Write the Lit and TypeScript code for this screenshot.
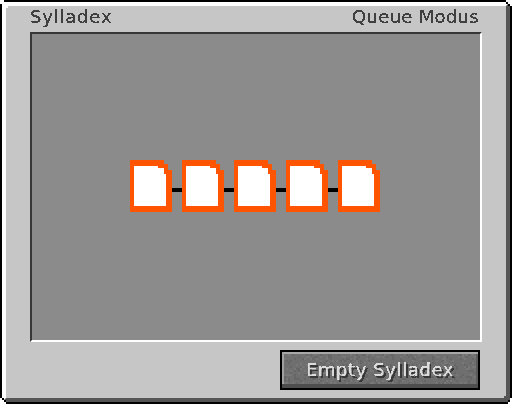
import { LitElement, html, css, svg } from "lit";
import { customElement } from "lit/decorators.js";

const noise = (() => {
  let seed = 7;
  const cells: { x: number; y: number; o: number }[] = [];
  for (let y = 0; y < 36; y += 2) {
    for (let x = 0; x < 196; x += 2) {
      seed = (seed * 1103515245 + 12345) & 0x7fffffff;
      const r = (seed >> 16) % 100;
      if (r < 30) cells.push({ x, y, o: r < 15 ? 1 : 0 });
    }
  }
  return cells;
})();

@customElement("app-root")
export class AppRoot extends LitElement {
  static styles = css`
    :host { display: block; width: 512px; height: 404px; background: #fff; font-family: "DejaVu Sans", sans-serif; }
    .window {
      width: 512px; height: 404px; box-sizing: border-box; padding: 2px; background: #000;
      clip-path: polygon(4px 0, 506px 0, 506px 2px, 508px 2px, 508px 4px, 510px 4px, 510px 6px, 512px 6px, 512px 398px, 510px 398px, 510px 402px, 508px 402px, 508px 404px, 6px 404px, 6px 402px, 4px 402px, 4px 400px, 2px 400px, 2px 398px, 0 398px, 0 4px, 2px 4px, 2px 2px, 4px 2px);
    }
    .bevel {
      height: 100%; box-sizing: border-box; border: 4px solid; border-color: #fff #555 #555 #fff;
      background: #c6c6c6;
      clip-path: polygon(0 0, 504px 0, 504px 2px, 506px 2px, 506px 4px, 508px 4px, 508px 398px, 506px 398px, 506px 400px, 4px 400px, 4px 398px, 2px 398px, 2px 396px, 0 396px);
    }
    .body {
      position: relative;
      height: 100%; box-sizing: border-box; padding: 0 24px; background: #c6c6c6;
      display: flex; flex-direction: column;
    }
    .body::before { content: ""; position: absolute; left: 0; top: 0; width: 2px; height: 2px; background: #fff; }
    .body::after { content: ""; position: absolute; right: 0; bottom: 0; width: 2px; height: 2px; background: #555; }
    .title {
      height: 26px; flex: none; display: flex; justify-content: space-between; align-items: center;
      padding: 0 3px 0 0; color: #404040; font-size: 18px; line-height: 22px; letter-spacing: 0.8px;
    }
    .title span { margin-top: -4px; filter: url(#crisp); }
    .title .modus { letter-spacing: 0.3px; }
    .frame {
      flex: none; height: 310px; box-sizing: border-box; background: #8b8b8b; border: 2px solid;
      border-color: #373737 #fff #fff #373737;
      display: flex; align-items: center; justify-content: center; padding: 0 2px 2px 0;
    }
    .card { display: block; width: 42px; height: 52px; flex: none; }
    .link { width: 10px; height: 4px; background: #000; flex: none; margin-top: 8px; }
    .actions { flex: 1; display: flex; justify-content: flex-end; align-items: flex-start; padding: 8px 2px 0 0; }
    .button {
      position: relative; width: 200px; height: 40px; box-sizing: border-box; border: 2px solid #000;
      background: #6f6f6f; padding: 0; color: #dcdcdc; font: inherit; font-size: 18px; letter-spacing: 0.6px;
      display: flex; align-items: center; justify-content: center; overflow: hidden;
    }
    .tex { position: absolute; inset: 0; width: 196px; height: 36px; display: block; }
    .label { position: relative; text-shadow: 2px 2px 0 #383838; margin-top: -1px; filter: url(#crisp); }
    .defs { position: absolute; width: 0; height: 0; }
  `;

  private card() {
    return html`<svg class="card" viewBox="0 0 42 52" shape-rendering="crispEdges">
      <polygon fill="#ff5500" points="0,0 34,0 34,4 38,4 38,10 42,10 42,52 0,52" />
      <polygon fill="#fff" points="4,6 28,6 28,8 34,8 34,14 36,14 36,46 4,46" />
    </svg>`;
  }

  render() {
    const cards = [0, 1, 2, 3, 4];
    return html`
      <svg class="defs" aria-hidden="true">
        <filter id="crisp" x="-5%" y="-5%" width="110%" height="110%" color-interpolation-filters="sRGB">
          <feComponentTransfer>
            <feFuncA type="discrete" tableValues="0 1 1" />
          </feComponentTransfer>
        </filter>
      </svg>
      <div class="window">
        <div class="bevel">
          <div class="body">
            <div class="title"><span>Sylladex</span><span class="modus">Queue Modus</span></div>
            <div class="frame">
              ${cards.map((i) => html`${i ? html`<div class="link"></div>` : ""}${this.card()}`)}
            </div>
            <div class="actions">
              <button class="button">
                <svg class="tex" viewBox="0 0 196 36" shape-rendering="crispEdges">
                  ${noise.map((c) => svg`<rect x=${c.x} y=${c.y} width="2" height="2" fill=${c.o ? "#787878" : "#666"} />`)}
                  <rect x="0" y="0" width="196" height="2" fill="#a8a8a8" />
                  <rect x="0" y="0" width="2" height="34" fill="#a0a0a0" />
                  <rect x="0" y="32" width="196" height="4" fill="#4e4e4e" />
                  <rect x="194" y="2" width="2" height="30" fill="#5a5a5a" />
                </svg>
                <span class="label">Empty Sylladex</span>
              </button>
            </div>
          </div>
        </div>
      </div>
    `;
  }
}
